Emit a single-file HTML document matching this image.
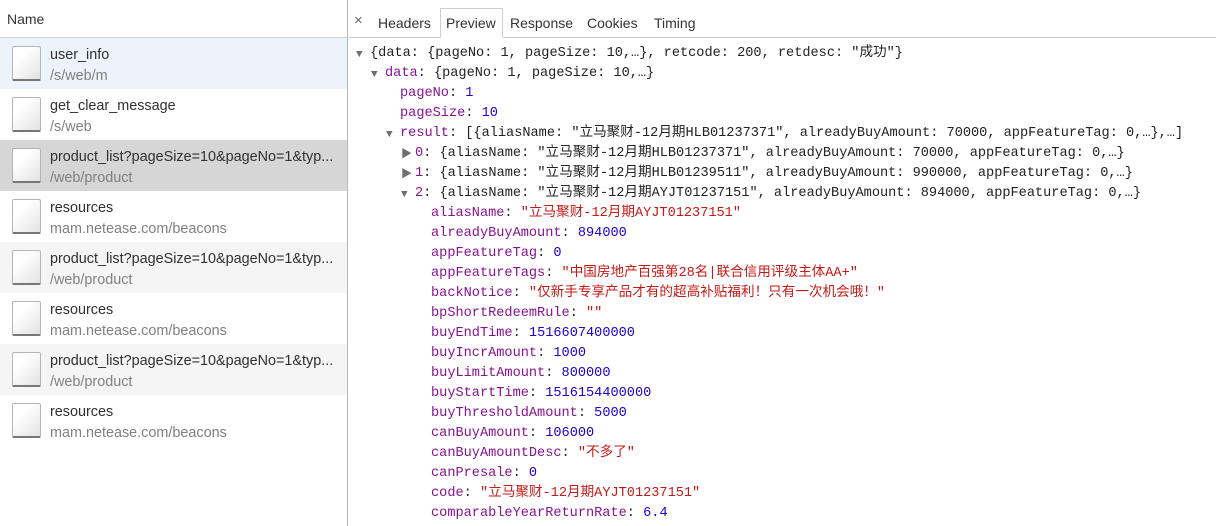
<!DOCTYPE html>
<html><head><meta charset="utf-8"><style>
*{margin:0;padding:0;box-sizing:border-box}
html,body{width:1216px;height:526px;overflow:hidden}
body{background:#fff;font-family:"Liberation Sans","Noto Sans CJK SC",sans-serif;position:relative}
#left{position:absolute;left:0;top:0;width:348px;height:526px;border-right:1px solid #b8b8b8}
#lh{height:38px;border-bottom:1px solid #cdcdcd;font-size:14px;color:#333;padding:11px 0 0 7px}
.row{height:51px;position:relative}
.ic{position:absolute;left:12px;top:8px;width:29px;height:35px;border:1px solid #b5b5b5;border-bottom:2px solid #777;border-radius:2px;background:linear-gradient(135deg,#fff 30%,#e2e2e2)}
.n{position:absolute;left:50px;top:9px;font-size:14.4px;color:#303030;white-space:nowrap}
.p{position:absolute;left:50px;top:30px;font-size:14.4px;color:#808080;white-space:nowrap}
#right{position:absolute;left:349px;top:0;width:867px;height:526px;overflow:hidden}
#tabs{height:38px;border-bottom:1px solid #cdcdcd;position:relative;font-size:14px;color:#333}
.t{position:absolute;top:15px}
#pv{position:absolute;left:91px;top:8px;width:63px;height:30px;border:1px solid #cdcdcd;border-bottom:1px solid #fff;background:#fff;padding:6px 0 0 5px}
#code{position:absolute;top:44px;left:0;width:900px;font-family:"Liberation Mono","Noto Sans CJK SC",monospace;font-size:13.6px;line-height:20px;color:#222}
.l{position:relative;height:20px}
.l>span{white-space:pre;position:absolute;top:0}
.k{color:#881391}.s{color:#c41a16}.num{color:#1c00cf}
.l>span.tri{color:#6e6e6e;font-size:11px;top:1px}
</style></head><body>
<div id="left">
<div id="lh">Name</div>
<div class="row" style="background:#edf3fb"><div class="ic"></div><div class="n">user_info</div><div class="p">/s/web/m</div></div>
<div class="row"><div class="ic"></div><div class="n">get_clear_message</div><div class="p">/s/web</div></div>
<div class="row" style="background:#d6d6d6"><div class="ic"></div><div class="n">product_list?pageSize=10&amp;pageNo=1&amp;typ...</div><div class="p">/web/product</div></div>
<div class="row"><div class="ic"></div><div class="n">resources</div><div class="p">mam.netease.com/beacons</div></div>
<div class="row" style="background:#f5f5f5"><div class="ic"></div><div class="n">product_list?pageSize=10&amp;pageNo=1&amp;typ...</div><div class="p">/web/product</div></div>
<div class="row"><div class="ic"></div><div class="n">resources</div><div class="p">mam.netease.com/beacons</div></div>
<div class="row" style="background:#f5f5f5"><div class="ic"></div><div class="n">product_list?pageSize=10&amp;pageNo=1&amp;typ...</div><div class="p">/web/product</div></div>
<div class="row"><div class="ic"></div><div class="n">resources</div><div class="p">mam.netease.com/beacons</div></div>
</div>
<div id="right">
<div id="tabs">
<span class="t" style="left:5px;top:12px;color:#666;font-size:15px">×</span>
<span class="t" style="left:29px">Headers</span>
<div id="pv">Preview</div>
<span class="t" style="left:161px">Response</span>
<span class="t" style="left:238px">Cookies</span>
<span class="t" style="left:305px">Timing</span>
</div>
<div id="code"><div class="l"><span class="tri" style="left:7px">▼</span><span style="left:21px">{data: {pageNo: 1, pageSize: 10,…}, retcode: 200, retdesc: "成功"}</span></div><div class="l"><span class="tri" style="left:22px">▼</span><span style="left:36px"><span class="k">data</span>: {pageNo: 1, pageSize: 10,…}</span></div><div class="l"><span style="left:51px"><span class="k">pageNo</span>: <span class="num">1</span></span></div><div class="l"><span style="left:51px"><span class="k">pageSize</span>: <span class="num">10</span></span></div><div class="l"><span class="tri" style="left:37px">▼</span><span style="left:51px"><span class="k">result</span>: [{aliasName: "立马聚财-12月期HLB01237371", alreadyBuyAmount: 70000, appFeatureTag: 0,…},…]</span></div><div class="l"><span class="tri" style="left:52px">▶</span><span style="left:66px"><span class="k">0</span>: {aliasName: "立马聚财-12月期HLB01237371", alreadyBuyAmount: 70000, appFeatureTag: 0,…}</span></div><div class="l"><span class="tri" style="left:52px">▶</span><span style="left:66px"><span class="k">1</span>: {aliasName: "立马聚财-12月期HLB01239511", alreadyBuyAmount: 990000, appFeatureTag: 0,…}</span></div><div class="l"><span class="tri" style="left:52px">▼</span><span style="left:66px"><span class="k">2</span>: {aliasName: "立马聚财-12月期AYJT01237151", alreadyBuyAmount: 894000, appFeatureTag: 0,…}</span></div><div class="l"><span style="left:82px"><span class="k">aliasName</span>: <span class="s">"立马聚财-12月期AYJT01237151"</span></span></div><div class="l"><span style="left:82px"><span class="k">alreadyBuyAmount</span>: <span class="num">894000</span></span></div><div class="l"><span style="left:82px"><span class="k">appFeatureTag</span>: <span class="num">0</span></span></div><div class="l"><span style="left:82px"><span class="k">appFeatureTags</span>: <span class="s">"中国房地产百强第28名|联合信用评级主体AA+"</span></span></div><div class="l"><span style="left:82px"><span class="k">backNotice</span>: <span class="s">"仅新手专享产品才有的超高补贴福利！只有一次机会哦！"</span></span></div><div class="l"><span style="left:82px"><span class="k">bpShortRedeemRule</span>: <span class="s">""</span></span></div><div class="l"><span style="left:82px"><span class="k">buyEndTime</span>: <span class="num">1516607400000</span></span></div><div class="l"><span style="left:82px"><span class="k">buyIncrAmount</span>: <span class="num">1000</span></span></div><div class="l"><span style="left:82px"><span class="k">buyLimitAmount</span>: <span class="num">800000</span></span></div><div class="l"><span style="left:82px"><span class="k">buyStartTime</span>: <span class="num">1516154400000</span></span></div><div class="l"><span style="left:82px"><span class="k">buyThresholdAmount</span>: <span class="num">5000</span></span></div><div class="l"><span style="left:82px"><span class="k">canBuyAmount</span>: <span class="num">106000</span></span></div><div class="l"><span style="left:82px"><span class="k">canBuyAmountDesc</span>: <span class="s">"不多了"</span></span></div><div class="l"><span style="left:82px"><span class="k">canPresale</span>: <span class="num">0</span></span></div><div class="l"><span style="left:82px"><span class="k">code</span>: <span class="s">"立马聚财-12月期AYJT01237151"</span></span></div><div class="l"><span style="left:82px"><span class="k">comparableYearReturnRate</span>: <span class="num">6.4</span></span></div></div>
</div>
</body></html>
